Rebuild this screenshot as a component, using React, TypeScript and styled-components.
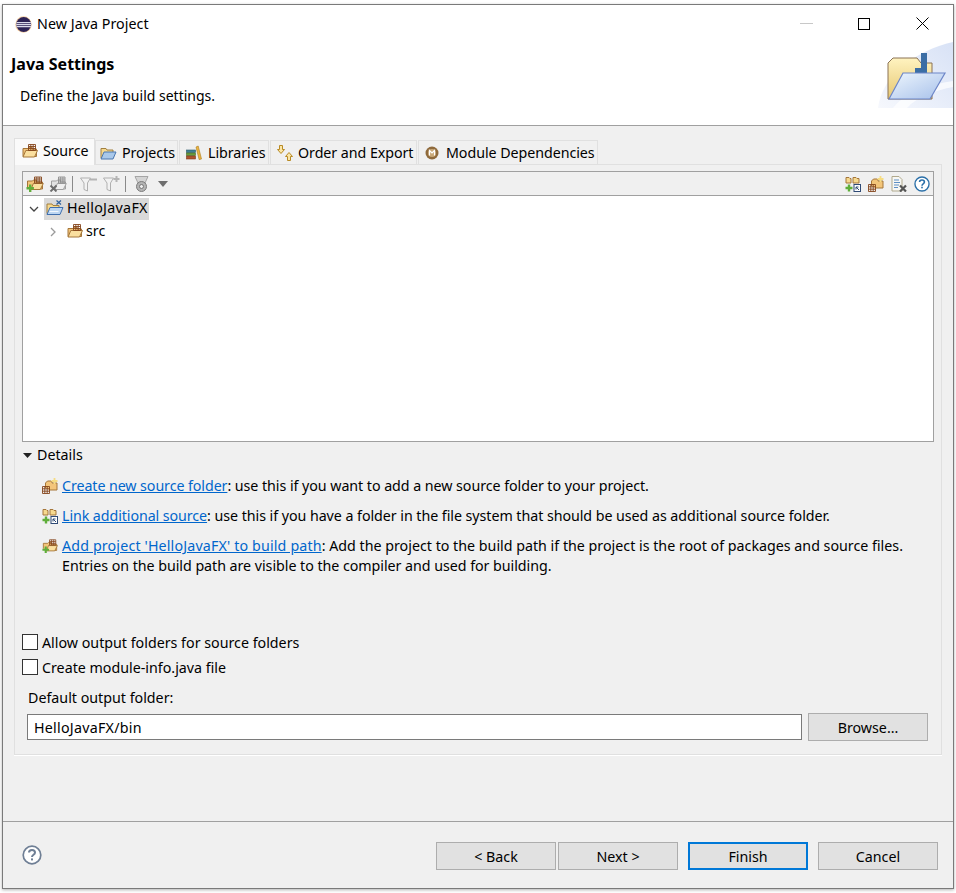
import React from 'react';
import styled, { createGlobalStyle } from 'styled-components';

const GlobalStyle = createGlobalStyle`
  html, body {
    margin: 0;
    padding: 0;
    background: #ffffff;
  }
  * {
    box-sizing: border-box;
  }
`;

const PackageFolder = () => (
  <svg width="16" height="16" viewBox="0 0 16 16">
    <path d="M1 13.5V5.5h5l1-1.5h3v2h4.5v7.5z" fill="#f3c57a" stroke="#a5763a" />
    <path d="M1 14l2.8-6.5h11.7L12.5 14z" fill="#fadf9f" stroke="#a5763a" />
    <path d="M6.5 1.5h7v6h-7zM8.8 1.5v6M11.2 1.5v6M6.5 3.5h7M6.5 5.5h7" fill="none" stroke="#85451c" strokeWidth="0.9" />
  </svg>
);

const PlusBadge = ({ x, y }: { x: number; y: number }) => (
  <path d={`M${x + 2.5} ${y}h2.4v2.5h2.5v2.4h-2.5v2.5h-2.4v-2.5H${x}v-2.4h2.5z`} fill="#5fae3a" />
);

const NewFolderIcon = ({ width = 18 }: { width?: number }) => (
  <svg width={width} height="16" viewBox="0 0 18 16">
    <path d="M1.5 11V5h5l1-1h3v2h6v7H6" fill="#f3c57a" stroke="#a5763a" />
    <path d="M5 13.5l2.3-6h10l-3 6z" fill="#fadf9f" stroke="#a5763a" />
    <path d="M8.5 1h7v6h-7zM10.8 1v6M13.2 1v6M8.5 3h7M8.5 5h7" fill="none" stroke="#85451c" strokeWidth="0.9" />
    <PlusBadge x={0.5} y={8.5} />
  </svg>
);

const RemoveFolderIcon = () => (
  <svg width="18" height="16" viewBox="0 0 18 16">
    <path d="M2.5 11V5h5l1-1h3v2h5v7H6" fill="#e2e2e2" stroke="#a0a0a0" />
    <path d="M6 13.5l2.3-6h9l-3 6z" fill="#efefef" stroke="#a0a0a0" />
    <path d="M9.5 1h6.5v6H9.5zM11.7 1v6M13.9 1v6M9.5 3h6.5M9.5 5h6.5" fill="none" stroke="#8d8d8d" strokeWidth="0.9" />
    <path d="M1.5 9.5l6 6M7.5 9.5l-6 6" stroke="#6d6d6d" strokeWidth="1.9" />
  </svg>
);

const FilterIcon = ({ plus }: { plus?: boolean }) => (
  <svg width="17" height="16" viewBox="0 0 17 16">
    <path d="M0.5 2h10L7.5 7v8L4 13.5V7z" fill="#f2f2f2" stroke="#b0b0b0" />
    {plus ? (
      <path d="M13.5 0v6M10.5 3h6" stroke="#b4b4b4" strokeWidth="2" />
    ) : (
      <path d="M10 3.5h7" stroke="#b4b4b4" strokeWidth="2" />
    )}
  </svg>
);

const ConfigureIcon = () => (
  <svg width="15" height="16" viewBox="0 0 15 16">
    <path d="M1 0.5h13L11 7H4z" fill="#d4d4d4" stroke="#a5a5a5" />
    <circle cx="7.5" cy="10.5" r="5" fill="#b4b4b4" stroke="#7c7c7c" />
    <circle cx="7.5" cy="10.5" r="2" fill="#efefef" stroke="#777" />
  </svg>
);

const DropCaret = () => (
  <svg width="10" height="6" viewBox="0 0 10 6">
    <path d="M0 0h10L5 6z" fill="#6e6e6e" />
  </svg>
);

const ProjectIcon = () => (
  <svg width="18" height="16" viewBox="0 0 18 16">
    <path d="M1 13.5V4h5l1 1.5h6V13.5z" fill="#f6d98e" stroke="#a17f3f" />
    <path d="M1 14.5l3-7h13l-3 7z" fill="#bcd6f2" stroke="#3f6fae" />
    <path d="M10.5 0.5l4.5 4M15 0.5l-4.5 4" stroke="#2d5f9c" strokeWidth="1.2" />
    <path d="M3.5 11.5h9" stroke="#ffffff" strokeWidth="0.8" />
  </svg>
);

const TabProjectsIcon = () => (
  <svg width="17" height="16" viewBox="0 0 17 16">
    <path d="M1 13V3.5h5l1 1.5h6v8z" fill="#f6d98e" stroke="#a17f3f" />
    <path d="M1 14l3-7h12l-3 7z" fill="#a9c8ea" stroke="#4a76b0" />
  </svg>
);

const BooksIcon = () => (
  <svg width="16" height="16" viewBox="0 0 16 16">
    <rect x="0.5" y="5" width="9" height="2.6" fill="#3f7f93" stroke="#2b5a6a" strokeWidth="0.6" />
    <rect x="0.5" y="8" width="9" height="2.6" fill="#6a9d3c" stroke="#466d27" strokeWidth="0.6" />
    <rect x="0.5" y="11" width="9" height="3" fill="#b0552d" stroke="#7c3a1e" strokeWidth="0.6" />
    <path d="M10 2l2.2-1 3.3 13-2.4 0.6z" fill="#eeb53f" stroke="#a87a1f" strokeWidth="0.6" />
  </svg>
);

const OrderIcon = () => (
  <svg width="16" height="16" viewBox="0 0 16 16">
    <path d="M2.5 0.5h3v4h2L4 8.5 0.5 4.5h2z" fill="#fbe6a6" stroke="#b88a25" />
    <path d="M10.5 15.5h3v-4h2L12 7.5 8.5 11.5h2z" fill="#fbe6a6" stroke="#b88a25" />
  </svg>
);

const ModuleIcon = () => (
  <svg width="14" height="14" viewBox="0 0 14 14">
    <circle cx="7" cy="7" r="6.5" fill="#8f6a3c" />
    <circle cx="7" cy="7" r="4" fill="#c9a877" />
    <path d="M4.5 9.5v-5L7 7l2.5-2.5v5" fill="none" stroke="#ffffff" strokeWidth="1.2" />
  </svg>
);

const LinkSourceIcon = () => (
  <svg width="16" height="16" viewBox="0 0 16 16">
    <path d="M1 7V1.5h3l1 1h1V7zM8 7V1.5h3l1 1h2V7z" fill="#f6d98e" stroke="#a5763a" />
    <path d="M0.5 12h7M4 8.5v7" stroke="#5fae3a" strokeWidth="2.4" />
    <rect x="9" y="8.5" width="6.5" height="7" fill="#ffffff" stroke="#2f4a75" />
    <path d="M14 14l-3-3M11 13.5V11h2.5" stroke="#2f4a75" fill="none" />
  </svg>
);

const NewSourceIcon = () => (
  <svg width="16" height="16" viewBox="0 0 16 16">
    <path d="M3.5 10V5l2-2h3.5l1 1v1h5v7H7" fill="#f3c57a" stroke="#a5763a" />
    <path d="M12.5 0v6M9.5 3h6" stroke="#f6dc82" strokeWidth="1.8" />
    <path d="M0.5 8.5h7v7h-7zM2.8 8.5v7M5.2 8.5v7M0.5 10.8h7M0.5 13.2h7" fill="none" stroke="#85451c" strokeWidth="0.9" />
  </svg>
);

const DocRemoveIcon = () => (
  <svg width="16" height="16" viewBox="0 0 16 16">
    <path d="M1 0.5h7l3 3v11.5H1z" fill="#f7f7f4" stroke="#b0a98d" />
    <path d="M3 4h5M3 6.5h6M3 9h5M3 11.5h4" stroke="#5e8fc4" />
    <path d="M9 9.5l6 6M15 9.5l-6 6" stroke="#555" strokeWidth="2.2" />
  </svg>
);

const HelpIcon = ({ size, color }: { size: number; color: string }) => (
  <svg width={size} height={size} viewBox="0 0 20 20">
    <circle cx="10" cy="10" r="8.8" fill="#ffffff" stroke={color} strokeWidth="1.7" />
    <path d="M7 7.6C7 5.8 8.4 5 10 5s3 .9 3 2.5c0 2.4-3 2.2-3 4.6" fill="none" stroke={color} strokeWidth="2" />
    <rect x="9" y="13.4" width="2" height="2" fill={color} />
  </svg>
);

const EclipseLogo = () => (
  <svg width="17" height="17" viewBox="0 0 17 17">
    <circle cx="8.5" cy="8.5" r="8.2" fill="#e9a24d" opacity="0.55" />
    <circle cx="8.7" cy="8.5" r="7.4" fill="#2c2255" />
    <path d="M1.5 6.6h14.4M1.2 8.6h15M1.5 10.6h14.4" stroke="#d9d9ea" strokeWidth="1.1" />
  </svg>
);

const BannerArt = () => (
  <svg width="76" height="69" viewBox="0 0 76 69">
    <defs>
      <linearGradient id="bannerBg" x1="0" y1="1" x2="1" y2="0">
        <stop offset="0" stopColor="#f6f8fd" />
        <stop offset="1" stopColor="#d8e2f6" />
      </linearGradient>
      <linearGradient id="folderBack" x1="0" y1="0" x2="0" y2="1">
        <stop offset="0" stopColor="#fff3c0" />
        <stop offset="1" stopColor="#e6c772" />
      </linearGradient>
      <linearGradient id="folderFront" x1="0" y1="0" x2="1" y2="1">
        <stop offset="0" stopColor="#eef6fd" />
        <stop offset="1" stopColor="#a6c0ea" />
      </linearGradient>
    </defs>
    <path d="M1 69C5 36 38 12 76 3v66z" fill="url(#bannerBg)" />
    <path d="M16 69C30 52 52 46 76 42v6C56 52 40 58 30 69z" fill="#ffffff" opacity="0.7" />
    <path d="M11 60V24l5-5h24l4 5h11v36z" fill="url(#folderBack)" stroke="#8b7355" />
    <path d="M44 14h6v20H38v-5h6z" fill="#3b6ea5" />
    <path d="M12 60l14-26h42L53 60z" fill="url(#folderFront)" stroke="#6d86c8" strokeWidth="1.2" />
  </svg>
);

const WindowFrame = styled.div`
  margin: 4px 2px;
  width: 952px;
  height: 885px;
  display: flex;
  flex-direction: column;
  background: #f0f0f0;
  border: 1px solid #7a7a7a;
  box-shadow: 0 1px 3px rgba(0, 0, 0, 0.3);
  color: #000000;
  font-family: 'Noto Sans', 'Open Sans', sans-serif;
  font-size: 14.25px;
  line-height: 20px;
`;

const TitleBar = styled.div`
  height: 39px;
  flex: none;
  display: flex;
  align-items: center;
  background: #ffffff;
  padding: 0 2px 0 12px;
`;

const TitleText = styled.span`
  flex: 1;
  padding: 0 0 2px 5px;
  letter-spacing: 0.05px;
`;

const WindowButton = styled.div`
  width: 58px;
  height: 39px;
  display: flex;
  align-items: center;
  justify-content: center;
  padding-bottom: 2px;
`;

const Header = styled.div`
  height: 82px;
  flex: none;
  display: flex;
  justify-content: space-between;
  background: #ffffff;
  border-bottom: 1px solid #a0a0a0;
`;

const HeaderText = styled.div`
  display: flex;
  flex-direction: column;
  padding: 10px 0 0 8px;
`;

const PageTitle = styled.div`
  font-size: 16px;
  font-weight: 700;
`;

const PageDescription = styled.div`
  margin: 12px 0 0 9px;
  font-size: 14px;
`;

const BannerSlot = styled.div`
  margin-top: -5px;
  height: 69px;
`;

const Content = styled.div`
  height: 696px;
  flex: none;
  padding: 12px 11px 0;
  display: flex;
  flex-direction: column;
  border-bottom: 1px solid #a0a0a0;
`;

const TabStrip = styled.div`
  display: flex;
  align-items: flex-end;
  height: 27px;
  flex: none;
  margin-bottom: -1px;
  position: relative;
`;

const Tab = styled.div<{ $active?: boolean; $width: number; $inset: number; $gap: number }>`
  width: ${({ $width }) => $width}px;
  height: ${({ $active }) => ($active ? 27 : 25)}px;
  display: flex;
  align-items: center;
  gap: ${({ $gap }) => $gap}px;
  padding-left: ${({ $inset }) => $inset}px;
  padding-bottom: ${({ $active }) => ($active ? 2 : 0)}px;
  background: ${({ $active }) => ($active ? '#fafafa' : '#f0f0f0')};
  border: 1px solid #e0e0e0;
  border-bottom: ${({ $active }) => ($active ? 'none' : '1px solid #e0e0e0')};
  margin-right: ${({ $active }) => ($active ? 0 : 1)}px;
  letter-spacing: -0.05px;
`;

const TabPanel = styled.div`
  width: 928px;
  height: 591px;
  flex: none;
  display: flex;
  flex-direction: column;
  padding: 6px 7px 13px;
  border: 1px solid #e0e0e0;
  box-shadow: 0 1px 0 #ffffff;
`;

const TreeBox = styled.div`
  width: 912px;
  height: 271px;
  flex: none;
  display: flex;
  flex-direction: column;
  background: #ffffff;
  border: 1px solid #a0a0a0;
`;

const Toolbar = styled.div`
  height: 24px;
  flex: none;
  display: flex;
  align-items: center;
  background: #f0f0f0;
  border-bottom: 1px solid #a0a0a0;
`;

const ToolItem = styled.div<{ $width?: number }>`
  width: ${({ $width }) => $width ?? 23}px;
  height: 23px;
  flex: none;
  display: flex;
  align-items: center;
  justify-content: center;
`;

const ToolbarSeparator = styled.div<{ $before: number }>`
  width: 1px;
  height: 16px;
  flex: none;
  margin: 0 4px 0 ${({ $before }) => $before}px;
  background: #8a8a8a;
`;

const ToolbarSpacer = styled.div`
  flex: 1;
`;

const TreeBody = styled.div`
  display: flex;
  flex-direction: column;
  padding-top: 1px;
`;

const TreeRow = styled.div<{ $indent: number }>`
  height: 23px;
  display: flex;
  align-items: center;
  padding-left: ${({ $indent }) => $indent}px;
`;

const TreeChevron = styled.svg<{ $after: number }>`
  margin-right: ${({ $after }) => $after}px;
  flex: none;
`;

const SelectedItem = styled.div`
  display: flex;
  align-items: center;
  height: 22px;
  padding: 0 1px 2px 2px;
  gap: 3px;
  background: #d9d9d9;
  letter-spacing: 0.3px;
`;

const PlainItem = styled.div`
  display: flex;
  align-items: center;
  gap: 3px;
  padding-bottom: 2px;
`;

const DetailsHeader = styled.div`
  height: 20px;
  margin-top: 3px;
  display: flex;
  align-items: center;
  gap: 5px;
  padding-left: 1px;
`;

const DetailsList = styled.div`
  display: flex;
  flex-direction: column;
  gap: 10px;
  padding: 11px 0 0 20px;
`;

const DetailRow = styled.div`
  display: flex;
  gap: 4px;
`;

const DetailIcon = styled.div`
  width: 16px;
  height: 20px;
  flex: none;
  display: flex;
  align-items: center;
`;

const DetailLine = styled.div<{ $tracking: number }>`
  letter-spacing: ${({ $tracking }) => $tracking}px;
`;

const Link = styled.a<{ $tracking?: number }>`
  color: #0066cc;
  text-decoration: underline;
  letter-spacing: ${({ $tracking }) => $tracking ?? -0.08}px;
`;

const LowerGroup = styled.div`
  margin-top: auto;
  display: flex;
  flex-direction: column;
`;

const CheckRow = styled.label`
  display: flex;
  align-items: center;
  height: 20px;
  gap: 4px;
  margin-bottom: 5px;
`;

const CheckBox = styled.span`
  width: 16px;
  height: 16px;
  flex: none;
  background: #ffffff;
  border: 1px solid #333333;
`;

const CheckText = styled.span`
  padding-top: 2px;
`;

const OutputLabel = styled.div`
  margin: 6px 0 5px 6px;
`;

const OutputRow = styled.div`
  display: flex;
  align-items: center;
  gap: 6px;
  padding-left: 5px;
`;

const OutputInput = styled.div`
  width: 775px;
  height: 26px;
  display: flex;
  align-items: center;
  padding: 2px 0 0 6px;
  background: #ffffff;
  border: 1px solid #7a7a7a;
  letter-spacing: 0.25px;
`;

const PushButton = styled.div<{ $default?: boolean }>`
  width: 120px;
  height: 28px;
  flex: none;
  display: flex;
  align-items: center;
  justify-content: center;
  padding-top: 2px;
  background: #e1e1e1;
  border: ${({ $default }) => ($default ? '2px solid #0078d7' : '1px solid #adadad')};
`;

const Footer = styled.div`
  flex: 1;
  display: flex;
  align-items: flex-start;
  padding: 20px 15px 0 19px;
`;

const FooterHelp = styled.div`
  flex: 1;
  padding-top: 3px;
`;

const WizardButtons = styled.div`
  display: flex;
  gap: 10px;
`;

const BackNext = styled.div`
  display: flex;
  gap: 2px;
`;

const App = () => {
  return (
    <>
      <GlobalStyle />
      <WindowFrame>
        <TitleBar>
          <EclipseLogo />
          <TitleText>New Java Project</TitleText>
          <WindowButton>
            <svg width="13" height="1">
              <rect width="13" height="1" fill="#c8c8c8" />
            </svg>
          </WindowButton>
          <WindowButton>
            <svg width="12" height="12">
              <rect x="0.5" y="0.5" width="11" height="11" fill="none" stroke="#000" />
            </svg>
          </WindowButton>
          <WindowButton>
            <svg width="13" height="13">
              <path d="M0.5 0.5l12 12M12.5 0.5l-12 12" stroke="#000" />
            </svg>
          </WindowButton>
        </TitleBar>
        <Header>
          <HeaderText>
            <PageTitle>Java Settings</PageTitle>
            <PageDescription>Define the Java build settings.</PageDescription>
          </HeaderText>
          <BannerSlot>
            <BannerArt />
          </BannerSlot>
        </Header>
        <Content>
          <TabStrip>
            <Tab $active $width={81} $inset={7} $gap={5}>
              <PackageFolder />
              Source
            </Tab>
            <Tab $width={83} $inset={4} $gap={5}>
              <TabProjectsIcon />
              Projects
            </Tab>
            <Tab $width={90} $inset={6} $gap={6}>
              <BooksIcon />
              Libraries
            </Tab>
            <Tab $width={147} $inset={6} $gap={5}>
              <OrderIcon />
              Order and Export
            </Tab>
            <Tab $width={180} $inset={6} $gap={7}>
              <ModuleIcon />
              Module Dependencies
            </Tab>
          </TabStrip>
          <TabPanel>
            <TreeBox>
              <Toolbar>
                <ToolItem>
                  <NewFolderIcon />
                </ToolItem>
                <ToolItem>
                  <RemoveFolderIcon />
                </ToolItem>
                <ToolbarSeparator $before={3} />
                <ToolItem>
                  <FilterIcon />
                </ToolItem>
                <ToolItem>
                  <FilterIcon plus />
                </ToolItem>
                <ToolbarSeparator $before={2} />
                <ToolItem>
                  <ConfigureIcon />
                </ToolItem>
                <ToolItem $width={20}>
                  <DropCaret />
                </ToolItem>
                <ToolbarSpacer />
                <ToolItem>
                  <LinkSourceIcon />
                </ToolItem>
                <ToolItem>
                  <NewSourceIcon />
                </ToolItem>
                <ToolItem>
                  <DocRemoveIcon />
                </ToolItem>
                <ToolItem>
                  <HelpIcon size={16} color="#2a6fa8" />
                </ToolItem>
              </Toolbar>
              <TreeBody>
                <TreeRow $indent={6}>
                  <TreeChevron $after={5} width="10" height="6" viewBox="0 0 10 6">
                    <path d="M1 1l4 4 4-4" fill="none" stroke="#444" strokeWidth="1.3" />
                  </TreeChevron>
                  <SelectedItem>
                    <ProjectIcon />
                    HelloJavaFX
                  </SelectedItem>
                </TreeRow>
                <TreeRow $indent={27}>
                  <TreeChevron $after={11} width="6" height="10" viewBox="0 0 6 10">
                    <path d="M1 1l4 4-4 4" fill="none" stroke="#9a9a9a" strokeWidth="1.3" />
                  </TreeChevron>
                  <PlainItem>
                    <PackageFolder />
                    src
                  </PlainItem>
                </TreeRow>
              </TreeBody>
            </TreeBox>
            <DetailsHeader>
              <svg width="9" height="5" viewBox="0 0 9 5">
                <path d="M0 0h9L4.5 5z" fill="#222" />
              </svg>
              Details
            </DetailsHeader>
            <DetailsList>
              <DetailRow>
                <DetailIcon>
                  <NewSourceIcon />
                </DetailIcon>
                <DetailLine $tracking={-0.05}>
                  <Link>Create new source folder</Link>: use this if you want to add a new source folder to your project.
                </DetailLine>
              </DetailRow>
              <DetailRow>
                <DetailIcon>
                  <LinkSourceIcon />
                </DetailIcon>
                <DetailLine $tracking={-0.05}>
                  <Link>Link additional source</Link>: use this if you have a folder in the file system that should be used as additional source folder.
                </DetailLine>
              </DetailRow>
              <DetailRow>
                <DetailIcon>
                  <NewFolderIcon width={17} />
                </DetailIcon>
                <div>
                  <DetailLine $tracking={0}>
                    <Link $tracking={0.15}>Add project 'HelloJavaFX' to build path</Link>: Add the project to the build path if the project is the root of packages and source files.
                  </DetailLine>
                  <DetailLine $tracking={-0.04}>
                    Entries on the build path are visible to the compiler and used for building.
                  </DetailLine>
                </div>
              </DetailRow>
            </DetailsList>
            <LowerGroup>
              <CheckRow>
                <CheckBox />
                <CheckText>Allow output folders for source folders</CheckText>
              </CheckRow>
              <CheckRow>
                <CheckBox />
                <CheckText>Create module-info.java file</CheckText>
              </CheckRow>
              <OutputLabel>Default output folder:</OutputLabel>
              <OutputRow>
                <OutputInput>HelloJavaFX/bin</OutputInput>
                <PushButton>Browse...</PushButton>
              </OutputRow>
            </LowerGroup>
          </TabPanel>
        </Content>
        <Footer>
          <FooterHelp>
            <HelpIcon size={20} color="#6f7f95" />
          </FooterHelp>
          <WizardButtons>
            <BackNext>
              <PushButton>&lt; Back</PushButton>
              <PushButton>Next &gt;</PushButton>
            </BackNext>
            <PushButton $default>Finish</PushButton>
            <PushButton>Cancel</PushButton>
          </WizardButtons>
        </Footer>
      </WindowFrame>
    </>
  );
};

export default App;
